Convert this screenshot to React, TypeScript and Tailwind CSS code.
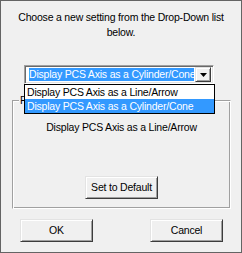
import React from "react";

const btn =
  "flex items-center justify-center bg-[#f0f0f0] border border-t-[#e3e3e3] border-l-[#e3e3e3] border-r-[#3c3c3c] border-b-[#3c3c3c] shadow-[inset_1px_1px_0_#ffffff,inset_-1px_-1px_0_#a0a0a0] text-[10.5px] tracking-[-0.2px] text-black";

export default function App() {
  return (
    <div
      className="relative w-[242px] h-[253px] border border-[#646464] bg-[#f0f0f0] flex flex-col text-[10.5px] tracking-[-0.2px] text-black"
      style={{ fontFamily: '"Liberation Sans", Arial, sans-serif' }}
    >
      <p className="mt-[9px] px-[8px] text-center leading-[15px]">
        Choose a new setting from the Drop-Down list below.
      </p>

      {/* combobox */}
      <div className="mt-[25px] ml-[23px] w-[190px] h-[19px] flex border border-t-[#a0a0a0] border-l-[#a0a0a0] border-r-[#ffffff] border-b-[#ffffff] shadow-[inset_1px_1px_0_#696969,inset_-1px_-1px_0_#e3e3e3] bg-white p-[2px]">
        <div className="flex-1 overflow-hidden whitespace-nowrap flex items-center pl-[2px]">
          <span className="bg-[#3399ff] text-white leading-[13px] pr-[1px]">
            Display PCS Axis as a Cylinder/Cone
          </span>
        </div>
        <div className="w-[16px] h-[15px] ml-[1px] -mt-[1px] flex items-center justify-center bg-[#f0f0f0] border border-t-[#e3e3e3] border-l-[#e3e3e3] border-r-[#3c3c3c] border-b-[#3c3c3c] shadow-[inset_1px_1px_0_#ffffff,inset_-1px_-1px_0_#a0a0a0]">
          <svg width="7" height="4" viewBox="0 0 7 4">
            <path d="M0 0h7L3.5 4z" fill="#000" />
          </svg>
        </div>
      </div>

      {/* group box */}
      <div className="relative mt-[16px] ml-[11px] w-[219px] h-[109px] border border-t-[#a0a0a0] border-l-[#a0a0a0] border-r-[#ffffff] border-b-[#ffffff] shadow-[inset_1px_1px_0_#ffffff,inset_-1px_-1px_0_#a0a0a0] flex flex-col items-center">
        <span className="absolute -top-[8px] left-[6px] bg-[#f0f0f0] px-[1px] leading-[14px]">
          Format
        </span>
        <p className="mt-[19px] leading-[14px]">Display PCS Axis as a Line/Arrow</p>
        <button className={`${btn} mt-[42px] w-[73px] h-[23px]`}>Set to Default</button>
      </div>

      {/* bottom buttons */}
      <div className="mt-[10px] flex">
        <button className={`${btn} ml-[19px] w-[73px] h-[23px]`}>OK</button>
        <button className={`${btn} ml-[57px] w-[73px] h-[23px]`}>Cancel</button>
      </div>

      {/* open dropdown list */}
      <div className="absolute left-[23px] top-[83px] w-[191px] h-[30px] border border-black bg-white flex flex-col">
        <div className="h-[14px] leading-[14px] pl-[2px] whitespace-nowrap">
          Display PCS Axis as a Line/Arrow
        </div>
        <div className="h-[14px] leading-[14px] pl-[2px] bg-[#3399ff] text-white whitespace-nowrap">
          Display PCS Axis as a Cylinder/Cone
        </div>
      </div>
    </div>
  );
}
